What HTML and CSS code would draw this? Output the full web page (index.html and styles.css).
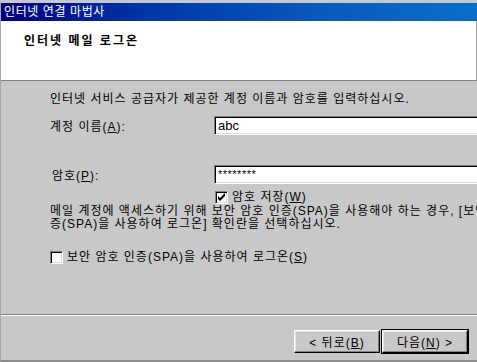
FILE: index.html
```html
<!DOCTYPE html>
<html>
<head>
    <meta http-equiv="Content-Type" content="text/html; charset=utf-8">
    <title>인터넷 연결 마법사</title>
    <link rel="stylesheet" href="styles.css">
</head>
<body>
<div class="wizard">
    <!-- 제목 표시줄 -->
    <div class="titlebar">인터넷 연결 마법사</div>

    <!-- 흰색 머리글 -->
    <div class="header">
        <div class="header-title">인터넷 메일 로그온</div>
    </div>

    <!-- 본문 -->
    <div class="content">
        <div class="intro">인터넷 서비스 공급자가 제공한 계정 이름과 암호를 입력하십시오.</div>

        <div class="field field-account">
            <label class="field-label">계정 이름(<u>A</u>):</label>
            <div class="textbox">abc</div>
        </div>

        <div class="field field-password">
            <label class="field-label label-pw">암호(<u>P</u>):</label>
            <div class="textbox textbox-pw">********</div>
        </div>

        <div class="check check-save">
            <span class="checkbox">
                <svg width="9" height="9" viewBox="0 0 9 9"><path d="M1 3 L3 5 L8 0 L8 3 L3 8 L1 6 Z" fill="#000"/></svg>
            </span>
            <span>암호 저장(<u>W</u>)</span>
        </div>

        <div class="note">메일 계정에 액세스하기 위해 보안 암호 인증(SPA)을 사용해야 하는 경우, [보안<br>증(SPA)을 사용하여 로그온] 확인란을 선택하십시오.</div>

        <div class="check check-spa">
            <span class="checkbox"></span>
            <span>보안 암호 인증(SPA)을 사용하여 로그온(<u>S</u>)</span>
        </div>
    </div>

    <!-- 버튼 영역 -->
    <div class="footer">
        <button class="btn">&lt; 뒤로(<u>B</u>)</button>
        <button class="btn btn-default">다음(<u>N</u>) &gt;</button>
    </div>
</div>
</body>
</html>
```

FILE: styles.css
```css
html, body {
    margin: 0;
    padding: 0;
    background: #c8c8c8;
}
body {
    font-family: "Liberation Sans", "Noto Sans CJK KR", sans-serif;
    font-size: 12px;
    letter-spacing: 1px;
    color: #000;
}
u {
    text-decoration: underline;
    text-underline-offset: 1px;
}

.wizard {
    width: 477px;
    height: 362px;
    box-sizing: border-box;
    border-top: 3px solid #c8c8c8;
    border-left: 1px solid #a8a8a8;
    border-bottom: 2px solid #8c8c8c;
    display: flex;
    flex-direction: column;
    overflow: hidden;
}

/* 제목 표시줄 */
.titlebar {
    height: 18px;
    line-height: 18px;
    padding-left: 3px;
    color: #fff;
    letter-spacing: 0.6px;
    background: linear-gradient(to right, #00007e 0%, #0036a8 30%, #0a5cc0 70%, #0a6ec8 100%);
}

/* 머리글 */
.header {
    height: 59px;
    background: #fff;
    border-bottom: 1px solid #808080;
    border-right: 1px solid #a0a0a0;
}
.header-title {
    font-weight: bold;
    letter-spacing: 2px;
    padding: 10px 0 0 23px;
}

/* 본문 */
.content {
    flex: 1;
    padding: 11px 0 0 49px;
    border-bottom: 1px solid #808080;
    box-shadow: 0 1px 0 #fff;
    white-space: nowrap;
    overflow: hidden;
}
.intro {
    line-height: 14px;
}
.field {
    display: flex;
    align-items: center;
}
.field-account {
    margin-top: 10px;
}
.field-password {
    margin-top: 30px;
}
.field-label {
    flex-shrink: 0;
    width: 164px;
}
.label-pw {
    padding-left: 2px;
    width: 162px;
}
.textbox {
    flex-shrink: 0;
    width: 280px;
    height: 17px;
    line-height: 17px;
    padding-left: 3px;
    background: #fff;
    border-top: 1px solid #808080;
    border-left: 1px solid #808080;
    border-bottom: 1px solid #fff;
    border-right: 1px solid #fff;
    box-shadow: inset 1px 1px 0 #000, inset -1px -1px 0 #dcdcdc;
    font-size: 13px;
    letter-spacing: 0;
}
.textbox-pw {
    font-size: 11px;
    letter-spacing: 0.5px;
}

.check {
    display: flex;
    align-items: center;
    gap: 4px;
    line-height: 14px;
}
.check-save {
    margin-top: 6px;
    margin-left: 165px;
}
.check-spa {
    margin-top: 19px;
}
.checkbox {
    flex-shrink: 0;
    width: 9px;
    height: 9px;
    padding: 1px;
    background: #fff;
    border-top: 1px solid #808080;
    border-left: 1px solid #808080;
    border-bottom: 1px solid #fff;
    border-right: 1px solid #fff;
    box-shadow: inset 1px 1px 0 #000, inset -1px -1px 0 #dcdcdc;
    display: flex;
    align-items: center;
    justify-content: center;
}
.checkbox svg {
    display: block;
}

.note {
    margin-top: 1px;
    line-height: 13px;
}

/* 버튼 영역 */
.footer {
    height: 43px;
    display: flex;
    justify-content: flex-end;
    align-items: flex-start;
    padding: 13px 9px 0 0;
    box-sizing: border-box;
    margin-top: 2px;
}
.btn {
    width: 86px;
    height: 23px;
    padding: 0;
    font: inherit;
    letter-spacing: 1px;
    color: #000;
    background: #c8c8c8;
    border-top: 1px solid #fff;
    border-left: 1px solid #fff;
    border-bottom: 1px solid #000;
    border-right: 1px solid #000;
    box-shadow: inset -1px -1px 0 #808080, inset 1px 1px 0 #e4e4e4;
}
.btn-default {
    margin-left: 2px;
    outline: 1px solid #000;
    border-color: #fff #000 #000 #fff;
}
```
